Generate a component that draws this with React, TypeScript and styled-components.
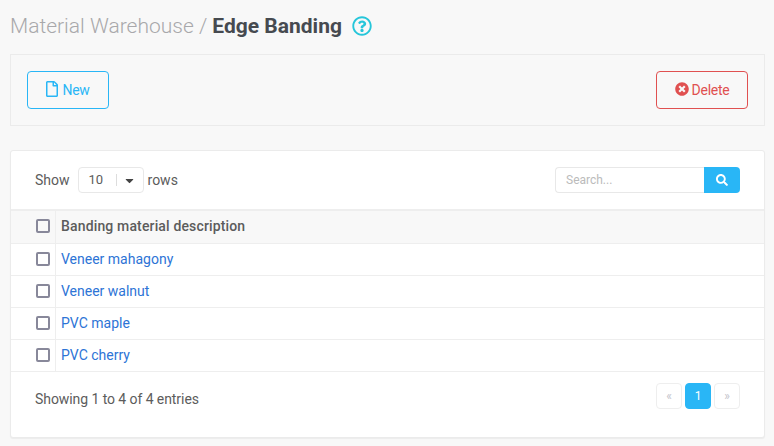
import React from "react";
import styled, { createGlobalStyle } from "styled-components";
import { FaRegFile, FaTimesCircle, FaSearch, FaCaretDown, FaRegQuestionCircle } from "react-icons/fa";

const GlobalStyle = createGlobalStyle`
  html, body {
    margin: 0;
    background: #f8f8f8;
    font-family: Roboto, "Liberation Sans", sans-serif;
    font-size: 14px;
    color: #5c5c5c;
  }
`;

const Page = styled.div`
  padding: 12px 9px 9px 10px;
`;

const Title = styled.div`
  display: flex;
  align-items: center;
  height: 28px;
  margin-bottom: 14px;
  font-size: 21px;
  font-weight: 300;
  color: #a8a8ab;
  white-space: pre;
`;

const TitleStrong = styled.span`
  font-weight: 700;
  color: #464a50;
`;

const HelpIcon = styled(FaRegQuestionCircle)`
  font-size: 20px;
  color: #26c6da;
  margin-left: 10px;
`;

const Toolbar = styled.div`
  display: flex;
  justify-content: space-between;
  height: 72px;
  box-sizing: border-box;
  padding: 16px;
  background: #f8f8f8;
  border: 1px solid #ebebeb;
  margin-bottom: 24px;
`;

const OutlineButton = styled.button<{ $color: string; $width: number }>`
  display: flex;
  align-items: center;
  justify-content: center;
  gap: 3px;
  width: ${(p) => p.$width}px;
  height: 38px;
  padding: 0;
  background: transparent;
  border: 1px solid ${(p) => p.$color};
  border-radius: 4px;
  color: ${(p) => p.$color};
  font-family: inherit;
  font-size: 14px;
  letter-spacing: -0.25px;
  svg {
    margin-bottom: 2px;
  }
`;

const NewButton = styled(OutlineButton)`
  gap: 2px;
  padding-right: 2px;
`;

const FileIcon = styled(FaRegFile)`
  font-size: 16px;
`;

const DeleteIcon = styled(FaTimesCircle)`
  font-size: 14px;
`;

const Card = styled.div`
  background: #fff;
  border: 1px solid #ebebeb;
  border-radius: 3px;
  box-shadow: 0 1px 1px rgba(0, 0, 0, 0.05);
`;

const CardTop = styled.div`
  display: flex;
  justify-content: space-between;
  align-items: center;
  height: 58px;
  padding: 0 24px;
`;

const RowsControl = styled.div`
  display: flex;
  align-items: center;
`;

const PageSize = styled.div`
  display: flex;
  align-items: center;
  width: 66px;
  height: 26px;
  margin: 0 4px 0 8px;
  box-sizing: border-box;
  border: 1px solid #e8e8e8;
  border-radius: 4px;
  padding-left: 10px;
  font-size: 13px;
`;

const PageSizeValue = styled.span`
  width: 27px;
  border-right: 1px solid #ddd;
  line-height: 12px;
`;

const Caret = styled(FaCaretDown)`
  margin-left: 6px;
  font-size: 13px;
  color: #444;
`;

const SearchBox = styled.div`
  display: flex;
  height: 26px;
`;

const SearchInput = styled.input`
  width: 149px;
  box-sizing: border-box;
  border: 1px solid #e8e8e8;
  border-right: 0;
  border-radius: 4px 0 0 4px;
  padding: 0 10px;
  font-family: inherit;
  font-size: 12px;
  outline: none;
  &::placeholder {
    color: #bbb;
    opacity: 1;
  }
`;

const SearchButton = styled.button`
  display: flex;
  align-items: center;
  justify-content: center;
  width: 36px;
  padding: 0;
  border: 0;
  border-radius: 0 4px 4px 0;
  background: #29b6f6;
  color: #fff;
  font-size: 12px;
`;

const Table = styled.div`
  border-top: 2px solid #eee;
`;

const Row = styled.div<{ $head?: boolean }>`
  display: flex;
  box-sizing: border-box;
  height: ${(p) => (p.$head ? 33 : 32)}px;
  border-bottom: 1px solid #eee;
  background: ${(p) => (p.$head ? "#f8f8f8" : "#fff")};
  font-weight: ${(p) => (p.$head ? 500 : 400)};
  letter-spacing: ${(p) => (p.$head ? "0.15px" : "normal")};
`;

const CheckCell = styled.div`
  display: flex;
  align-items: center;
  width: 45px;
  box-sizing: border-box;
  padding: 0 0 2px 25px;
  border-right: 1px solid #eee;
`;

const Check = styled.span`
  width: 14px;
  height: 14px;
  box-sizing: border-box;
  border: 2px solid #88889a;
  border-radius: 2px;
`;

const TextCell = styled.div`
  display: flex;
  align-items: center;
  padding: 0 0 2px 5px;
`;

const Link = styled.a`
  color: #2d74d6;
  text-decoration: none;
`;

const CardBottom = styled.div`
  display: flex;
  justify-content: space-between;
  height: 65px;
  padding: 11px 24px 0;
  box-sizing: border-box;
`;

const Entries = styled.span`
  margin-top: 8px;
  letter-spacing: -0.07px;
`;

const Pager = styled.div`
  display: flex;
  gap: 3px;
`;

const PageButton = styled.div<{ $active?: boolean }>`
  display: flex;
  align-items: center;
  justify-content: center;
  width: 26px;
  height: 26px;
  box-sizing: border-box;
  border: 1px solid ${(p) => (p.$active ? "#29b6f6" : "#eee")};
  border-radius: 4px;
  background: ${(p) => (p.$active ? "#29b6f6" : "#fff")};
  color: ${(p) => (p.$active ? "#fff" : "#c4c4cc")};
  font-size: 12px;
`;

const materials = ["Veneer mahagony", "Veneer walnut", "PVC maple", "PVC cherry"];

const App = () => (
  <Page>
    <GlobalStyle />
    <Title>
      Material Warehouse / <TitleStrong>Edge Banding</TitleStrong>
      <HelpIcon />
    </Title>
    <Toolbar>
      <NewButton $color="#29b6f6" $width={82}>
        <FileIcon />
        New
      </NewButton>
      <OutlineButton $color="#e05050" $width={92}>
        <DeleteIcon />
        Delete
      </OutlineButton>
    </Toolbar>
    <Card>
      <CardTop>
        <RowsControl>
          Show
          <PageSize>
            <PageSizeValue>10</PageSizeValue>
            <Caret />
          </PageSize>
          rows
        </RowsControl>
        <SearchBox>
          <SearchInput placeholder="Search..." />
          <SearchButton>
            <FaSearch />
          </SearchButton>
        </SearchBox>
      </CardTop>
      <Table>
        <Row $head>
          <CheckCell>
            <Check />
          </CheckCell>
          <TextCell>Banding material description</TextCell>
        </Row>
        {materials.map((m) => (
          <Row key={m}>
            <CheckCell>
              <Check />
            </CheckCell>
            <TextCell>
              <Link href="#">{m}</Link>
            </TextCell>
          </Row>
        ))}
      </Table>
      <CardBottom>
        <Entries>Showing 1 to 4 of 4 entries</Entries>
        <Pager>
          <PageButton>«</PageButton>
          <PageButton $active>1</PageButton>
          <PageButton>»</PageButton>
        </Pager>
      </CardBottom>
    </Card>
  </Page>
);

export default App;
